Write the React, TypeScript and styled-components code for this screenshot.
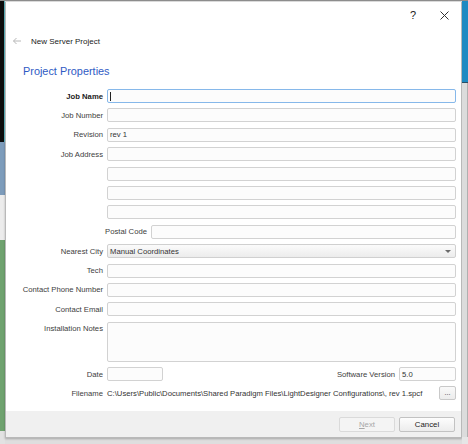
import React from "react";
import styled, { createGlobalStyle } from "styled-components";

const Global = createGlobalStyle`
  html, body { margin: 0; padding: 0; overflow: hidden; }
  body { font-family: "Liberation Sans", Arial, sans-serif; background: #dcdcdc; -webkit-font-smoothing: antialiased; }
`;

const Page = styled.div`
  width: 468px;
  height: 444px;
  display: flex;
  flex-direction: row;
  background: #dedede;
  border-top: 1px solid #8c8c8c;
  box-sizing: border-box;
`;

const Strip = styled.div<{ $w: number }>`
  width: ${(p) => p.$w}px;
  flex: none;
  display: flex;
  flex-direction: column;
`;

const Seg = styled.div<{ $h?: number; $bg: string; $edge?: string }>`
  ${(p) => (p.$h ? `height: ${p.$h}px; flex: none;` : "flex: 1;")}
  background: ${(p) => p.$bg};
  box-shadow: ${(p) => (p.$edge ? `inset -1px 0 0 ${p.$edge}` : "none")};
`;

const Center = styled.div`
  width: 457px;
  flex: none;
  display: flex;
  flex-direction: column;
  padding-top: 1px;
`;

const Dialog = styled.div`
  height: 436px;
  background: #ffffff;
  border: 1px solid #b9b9b9;
  border-top: none;
  box-sizing: border-box;
  display: flex;
  flex-direction: column;
  box-shadow: 0 1px 2px rgba(0, 0, 0, 0.25);
  color: #3a3a3a;
  font-size: 7.7px;
`;

const TitleBar = styled.div`
  height: 26px;
  display: flex;
  justify-content: flex-end;
  align-items: center;
  padding-right: 7px;
  gap: 11px;
`;

const TitleButton = styled.div`
  width: 20px;
  height: 20px;
  display: flex;
  align-items: center;
  justify-content: center;
  font-size: 11px;
  color: #222;
`;

const Header = styled.div`
  height: 26px;
  display: flex;
  align-items: center;
  padding-left: 6px;
  gap: 9px;
  font-size: 8px;
  color: #1a1a1a;
`;

const SectionTitle = styled.div`
  height: 34px;
  display: flex;
  align-items: center;
  padding-left: 17px;
  padding-bottom: 1px;
  box-sizing: border-box;
  font-size: 10.9px;
  color: #2f5bc4;
`;

const Form = styled.div`
  display: grid;
  grid-template-columns: 97px 349px;
  column-gap: 4px;
  row-gap: 5.4px;
  padding-top: 1px;
`;

const Label = styled.div<{ $bold?: boolean; $top?: boolean }>`
  height: 14px;
  display: flex;
  align-items: ${(p) => (p.$top ? "flex-start" : "center")};
  justify-content: flex-end;
  padding-top: ${(p) => (p.$top ? "2px" : "0")};
  box-sizing: border-box;
  font-weight: ${(p) => (p.$bold ? "bold" : "normal")};
  color: ${(p) => (p.$bold ? "#222222" : "#404040")};
  white-space: nowrap;
`;

const Field = styled.div<{ $h?: number; $focus?: boolean; $w?: number }>`
  height: ${(p) => p.$h ?? 14}px;
  ${(p) => (p.$w ? `width: ${p.$w}px;` : "")}
  box-sizing: border-box;
  border: 1px solid ${(p) => (p.$focus ? "#86b8ea" : "#d2d2d2")};
  border-radius: 2px;
  background: #fcfcfc;
  display: flex;
  align-items: center;
  padding-left: 2px;
  color: #333333;
`;

const Caret = styled.div`
  width: 1px;
  height: 9px;
  background: #222;
`;

const Inline = styled.div<{ $cols: string }>`
  display: grid;
  grid-template-columns: ${(p) => p.$cols};
  column-gap: 4px;
  align-items: center;
`;

const Select = styled.div`
  height: 14px;
  box-sizing: border-box;
  border: 1px solid #d0d0d0;
  border-radius: 2px;
  background: linear-gradient(#fbfbfb, #ececec);
  display: flex;
  align-items: center;
  justify-content: space-between;
  padding: 0 4px 0 2px;
  color: #333333;
`;

const Arrow = styled.div`
  width: 0;
  height: 0;
  border-left: 3px solid transparent;
  border-right: 3px solid transparent;
  border-top: 3px solid #6a6a6a;
`;

const PathRow = styled.div`
  height: 14px;
  display: flex;
  align-items: center;
  justify-content: space-between;
  white-space: nowrap;
  color: #333333;
`;

const SmallButton = styled.div`
  width: 17px;
  height: 14px;
  box-sizing: border-box;
  border: 1px solid #c9c9c9;
  border-radius: 2px;
  background: linear-gradient(#f9f9f9, #ececec);
  display: flex;
  align-items: flex-end;
  justify-content: center;
  padding-bottom: 3px;
  font-size: 7px;
  color: #333;
  line-height: 1;
`;

const Spacer = styled.div`
  flex: 1;
`;

const Footer = styled.div`
  height: 26px;
  background: #f0f0f0;
  display: flex;
  justify-content: flex-end;
  align-items: flex-start;
  padding: 6px 6px 0 0;
  gap: 4px;
  box-sizing: border-box;
`;

const Button = styled.div<{ $disabled?: boolean }>`
  width: 56px;
  height: 15px;
  box-sizing: border-box;
  border: 1px solid ${(p) => (p.$disabled ? "#dadada" : "#c2c2c2")};
  border-radius: 2px;
  background: ${(p) => (p.$disabled ? "#f4f4f4" : "linear-gradient(#fdfdfd, #ececec)")};
  color: ${(p) => (p.$disabled ? "#a8a8a8" : "#222")};
  display: flex;
  align-items: center;
  justify-content: center;
  font-size: 7.8px;
`;

const Under = styled.span`
  text-decoration: underline;
`;

const BackArrow = () => (
  <svg width="10" height="8" viewBox="0 0 10 8">
    <path d="M9 4H1.5M4.5 1L1.5 4L4.5 7" stroke="#b8b8b8" strokeWidth="1" fill="none" />
  </svg>
);

const CloseIcon = () => (
  <svg width="9" height="9" viewBox="0 0 9 9">
    <path d="M0.5 0.5L8.5 8.5M8.5 0.5L0.5 8.5" stroke="#333" strokeWidth="1" fill="none" />
  </svg>
);

const rows: { label: string; bold?: boolean; value?: string; focus?: boolean }[] = [
  { label: "Job Name", bold: true, focus: true },
  { label: "Job Number" },
  { label: "Revision", value: "rev 1" },
  { label: "Job Address" },
  { label: "" },
  { label: "" },
  { label: "" },
];

const rows2 = ["Tech", "Contact Phone Number", "Contact Email"];

export default function App() {
  return (
    <>
      <Global />
      <Page>
        <Strip $w={5}>
          <Seg $h={141} $bg="#0d0d0d" $edge="#5fb7c0" />
          <Seg $h={53} $bg="#7d9cbb" />
          <Seg $h={45} $bg="#ececec" />
          <Seg $h={191} $bg="#6fa26f" />
          <Seg $bg="#e2e2e2" />
        </Strip>
        <Center>
          <Dialog>
            <TitleBar>
              <TitleButton>?</TitleButton>
              <TitleButton>
                <CloseIcon />
              </TitleButton>
            </TitleBar>
            <Header>
              <BackArrow />
              <span>New Server Project</span>
            </Header>
            <SectionTitle>Project Properties</SectionTitle>
            <Form>
              {rows.map((r, i) => (
                <React.Fragment key={i}>
                  <Label $bold={r.bold}>{r.label}</Label>
                  <Field $focus={r.focus}>
                    {r.focus ? <Caret /> : r.value}
                  </Field>
                </React.Fragment>
              ))}
              <Label />
              <Inline $cols="40px 1fr">
                <Label>Postal Code</Label>
                <Field />
              </Inline>
              <Label>Nearest City</Label>
              <Select>
                <span>Manual Coordinates</span>
                <Arrow />
              </Select>
              {rows2.map((l) => (
                <React.Fragment key={l}>
                  <Label>{l}</Label>
                  <Field />
                </React.Fragment>
              ))}
              <Label $top>Installation Notes</Label>
              <Field $h={40} />
              <Label>Date</Label>
              <Inline $cols="56px 1fr 57px">
                <Field $w={56} />
                <Label>Software Version</Label>
                <Field>5.0</Field>
              </Inline>
              <Label>Filename</Label>
              <PathRow>
                <span>
                  C:\Users\Public\Documents\Shared Paradigm Files\LightDesigner Configurations\, rev 1.spcf
                </span>
                <SmallButton>...</SmallButton>
              </PathRow>
            </Form>
            <Spacer />
            <Footer>
              <Button $disabled>
                <Under>N</Under>ext
              </Button>
              <Button>Cancel</Button>
            </Footer>
          </Dialog>
        </Center>
        <Strip $w={6}>
          <Seg $h={81} $bg="#1f8ac2" />
          <Seg $h={1} $bg="#2a4f66" />
          <Seg $h={354} $bg="#dcdcdc" $edge="#b0b0b0" />
          <Seg $bg="#e6e6e6" />
        </Strip>
      </Page>
    </>
  );
}
